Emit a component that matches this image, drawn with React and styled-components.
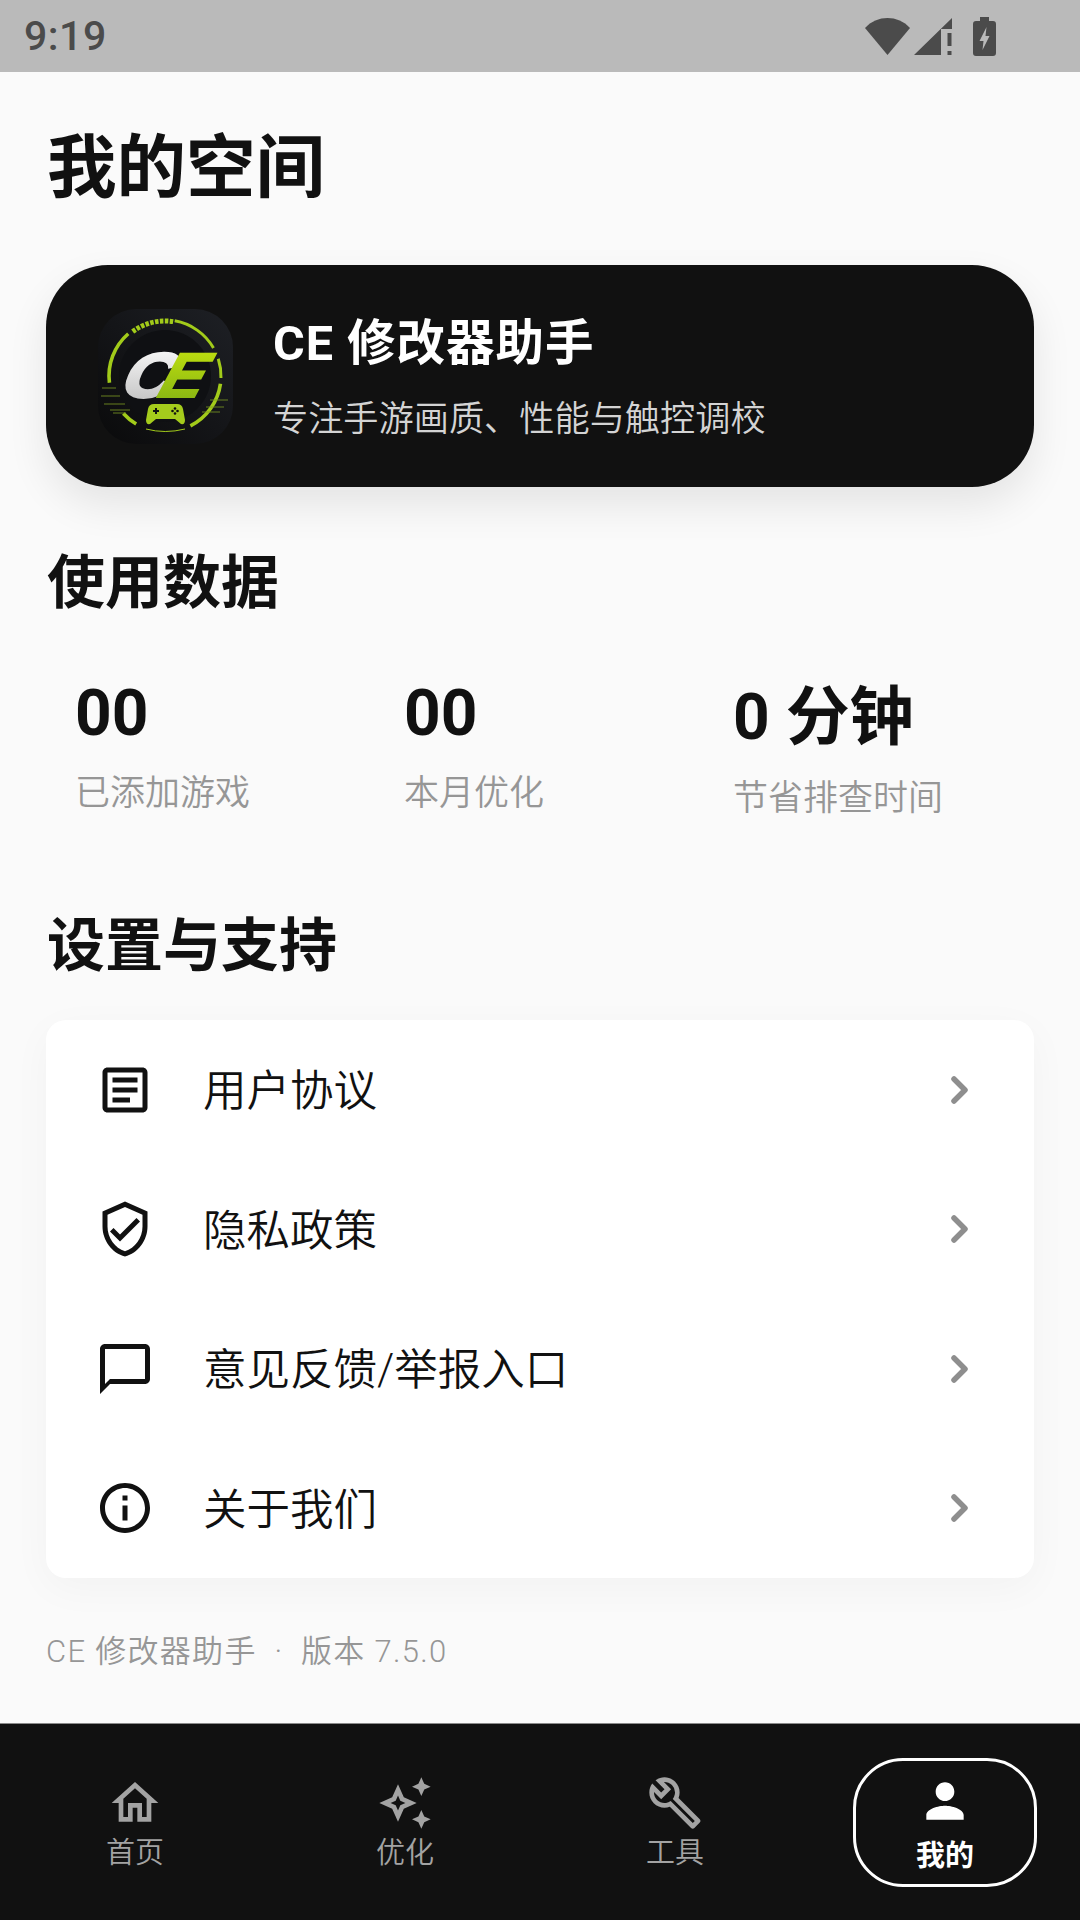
import React from 'react';
import styled, { createGlobalStyle } from 'styled-components';
import {
  MdOutlineArticle,
  MdOutlineVerifiedUser,
  MdChatBubbleOutline,
  MdInfoOutline,
  MdOutlineHome,
  MdOutlineAutoAwesome,
  MdOutlineBuild,
  MdPerson,
} from 'react-icons/md';

const GlobalStyle = createGlobalStyle`
  html, body {
    margin: 0;
    padding: 0;
    background: #fafafa;
  }
  * {
    box-sizing: border-box;
  }
`;

const Page = styled.div`
  width: 1080px;
  height: 1920px;
  display: flex;
  flex-direction: column;
  background: #fafafa;
  color: #111;
  font-family: Roboto, "Noto Sans CJK SC", sans-serif;
  overflow: hidden;
`;

const StatusBar = styled.div`
  height: 72px;
  flex: none;
  display: flex;
  align-items: center;
  justify-content: space-between;
  padding: 0 84px 0 24px;
  background: #bababa;
  color: #4b4b4b;
`;

const Clock = styled.span`
  font-size: 41px;
  font-weight: 500;
  letter-spacing: 0.5px;
`;

const StatusIcons = styled.div`
  display: flex;
  align-items: center;
  gap: 4px;
`;

const Main = styled.main`
  flex: 1;
  padding: 47px 46px 0;
  display: flex;
  flex-direction: column;
`;

const PageTitle = styled.h1`
  margin: 0 0 0 1px;
  font-size: 69.5px;
  line-height: 100px;
  font-weight: 700;
  color: #111;
`;

const HeroCard = styled.section`
  margin-top: 46px;
  height: 222px;
  flex: none;
  display: flex;
  align-items: center;
  gap: 40px;
  padding: 0 0 0 52px;
  background: #111;
  border-radius: 62px;
  box-shadow: 0 18px 40px rgba(0, 0, 0, 0.09);
`;

const HeroText = styled.div`
  display: flex;
  flex-direction: column;
  gap: 16px;
  margin-bottom: 8px;
`;

const HeroName = styled.div`
  font-size: 48.5px;
  font-weight: 700;
  color: #fff;
  letter-spacing: 1px;
`;

const HeroDesc = styled.div`
  font-size: 35.2px;
  font-weight: 350;
  color: #d4d4d4;
`;

const SectionTitle = styled.h2`
  margin: ${(p) => p.$top}px 0 0 1px;
  font-size: 58px;
  line-height: 80px;
  font-weight: 700;
  color: #111;
`;

const StatsRow = styled.div`
  margin-top: 53px;
  display: grid;
  grid-template-columns: repeat(3, 329px);
  padding-left: 29px;
  align-items: start;
`;

const Stat = styled.div`
  display: flex;
  flex-direction: column;
  gap: 13px;
`;

const StatValue = styled.div`
  font-size: 64px;
  line-height: 75px;
  font-weight: 700;
  color: #111;
  margin: ${(p) => (p.$cjk ? '4px 0 1px' : '0')};
`;

const StatLabel = styled.div`
  font-size: 35px;
  font-weight: 350;
  color: #969696;
`;

const SettingsCard = styled.section`
  margin-top: 34px;
  flex: none;
  background: #fff;
  border-radius: 20px;
  box-shadow: 0 10px 40px rgba(0, 0, 0, 0.035);
`;

const SettingRow = styled.div`
  height: 139.5px;
  display: flex;
  align-items: center;
  padding: 0 46px 0 49px;
  gap: 48px;
  font-size: 43.5px;
  font-weight: 350;
  color: #111;

  svg.lead {
    width: 60px;
    height: 60px;
    flex: none;
    color: #111;
  }
`;

const SettingLabel = styled.span`
  flex: 1;
  padding-bottom: 4px;
`;

const Footnote = styled.div`
  margin: 48px 0 0;
  font-size: 31px;
  font-weight: 350;
  color: #969696;
  letter-spacing: 1.3px;
  white-space: pre;
`;

const BottomNav = styled.nav`
  height: 197px;
  flex: none;
  display: grid;
  grid-template-columns: repeat(4, 270px);
  align-items: center;
  background: #111;
  border-top: 1px solid #8a8a8a;
`;

const NavItem = styled.div`
  justify-self: center;
  display: flex;
  flex-direction: column;
  align-items: center;
  justify-content: center;
  gap: ${(p) => (p.$active ? '9px' : '4px')};
  width: ${(p) => (p.$active ? '184px' : '160px')};
  height: 129px;
  padding-top: 2px;
  border-radius: 50px;
  border: ${(p) => (p.$active ? '3px solid #fff' : '3px solid transparent')};
  color: ${(p) => (p.$active ? '#fff' : '#a3a3a3')};
  font-size: 29px;
  font-weight: ${(p) => (p.$active ? 700 : 350)};
  line-height: 36px;

  svg {
    width: 56px;
    height: 56px;
    flex: none;
  }
`;

const Chevron = () => (
  <svg width="56" height="56" viewBox="0 0 56 56" fill="none">
    <path d="M22 17 L33 28 L22 39" stroke="#8e8e8e" strokeWidth="5.5" strokeLinecap="round" strokeLinejoin="round" />
  </svg>
);

const WifiIcon = () => (
  <svg width="45" height="37" viewBox="0 0 45 37">
    <path d="M0 10 C12 -3.3 33 -3.3 45 10 L22.5 37 Z" fill="#4b4b4b" />
  </svg>
);

const SignalIcon = () => (
  <svg width="38" height="37" viewBox="0 0 38 37">
    <path d="M0 37 L38 0 V11 H27 V37 Z" fill="#4b4b4b" />
    <rect x="33.5" y="15" width="4" height="13" fill="#4b4b4b" />
    <rect x="33.5" y="33" width="4" height="4" fill="#4b4b4b" />
  </svg>
);

const BatteryIcon = () => (
  <svg width="23" height="39" viewBox="0 0 23 39" style={{ marginLeft: 17 }}>
    <path d="M7 0 H16 V4 H20 Q23 4 23 7 V36 Q23 39 20 39 H3 Q0 39 0 36 V7 Q0 4 3 4 H7 Z" fill="#4b4b4b" />
    <path d="M13.5 10 L6.5 24 H10.5 L9.5 33 L16.5 19 H12.5 Z" fill="#bababa" />
  </svg>
);

// ring segments of the logo, angles are clockwise from the top
const arc = (from, to, r = 56) => {
  const pt = (deg) => {
    const a = (deg * Math.PI) / 180;
    return `${(67 + r * Math.sin(a)).toFixed(2)} ${(67 - r * Math.cos(a)).toFixed(2)}`;
  };
  return `M${pt(from)} A${r} ${r} 0 ${to - from > 180 ? 1 : 0} 1 ${pt(to)}`;
};

const Logo = () => (
  <svg width="135" height="135" viewBox="0 0 135 135" style={{ flex: 'none' }}>
    <defs>
      <linearGradient id="logoBg" x1="1" y1="0" x2="0" y2="1">
        <stop offset="0" stopColor="#1e2025" />
        <stop offset="1" stopColor="#0a0a0b" />
      </linearGradient>
      <linearGradient id="logoC" x1="0" y1="0" x2="0" y2="1">
        <stop offset="0" stopColor="#ffffff" />
        <stop offset="1" stopColor="#bdbdbd" />
      </linearGradient>
      <linearGradient id="logoE" x1="0" y1="0" x2="0" y2="1">
        <stop offset="0" stopColor="#c8e60e" />
        <stop offset="1" stopColor="#7fae14" />
      </linearGradient>
    </defs>
    <rect width="135" height="135" rx="38" fill="url(#logoBg)" />
    <circle cx="67" cy="67" r="46" fill="#0f1013" />
    <g fill="none" stroke="#a2cb1a" strokeWidth="3">
      <path d={arc(-36, 8.5, 55)} strokeWidth="5" strokeDasharray="3.5 1.4" />
      <path d={arc(10, 60)} />
      <path d={arc(72, 92)} />
      <path d={arc(98, 153)} strokeWidth="3.6" />
      <path d={arc(-149, -132)} strokeWidth="3.6" />
      <path d={arc(-97, -41)} strokeWidth="3.6" />
      <path d="M48 120 Q67 125 87 120" strokeWidth="1" />
    </g>
    <g stroke="#7d9a22" strokeWidth="1" opacity="0.8">
      <path d="M4 79 H18 M3 87 H22 M6 95 H27 M12 101 H32 M15 104 H28" />
      <path d="M112 91 H130 M108 98 H126 M104 103 H122" />
    </g>
    <text
      transform="translate(19 87.5) skewX(-24) scale(1.12 1)"
      fontFamily="Liberation Sans, sans-serif"
      fontWeight="700"
      fontSize="63"
      fill="url(#logoC)"
      stroke="url(#logoC)"
      strokeWidth="2.6"
    >
      C
    </text>
    <text
      transform="translate(55 87.5) skewX(-28) scale(1.04 1)"
      fontFamily="Liberation Sans, sans-serif"
      fontWeight="700"
      fontSize="63"
      fill="url(#logoE)"
      stroke="url(#logoE)"
      strokeWidth="2"
    >
      E
    </text>
    <path
      d="M56 95 H79 Q84 95 85 100 L87 111 Q87 116 83 115 L77 110 H58 L52 115 Q48 116 48 111 L50 100 Q51 95 56 95 Z"
      fill="#a5cc1c"
    />
    <path d="M55 102 H61 M58 99 V105" stroke="#111" strokeWidth="2" />
    <g fill="#111">
      <circle cx="77" cy="99.5" r="1.3" />
      <circle cx="77" cy="104.5" r="1.3" />
      <circle cx="74.5" cy="102" r="1.3" />
      <circle cx="79.5" cy="102" r="1.3" />
    </g>
  </svg>
);

const stats = [
  { value: '00', label: '已添加游戏' },
  { value: '00', label: '本月优化' },
  { value: '0 分钟', label: '节省排查时间', cjk: true },
];

const settings = [
  { icon: MdOutlineArticle, label: '用户协议' },
  { icon: MdOutlineVerifiedUser, label: '隐私政策' },
  { icon: MdChatBubbleOutline, label: '意见反馈/举报入口' },
  { icon: MdInfoOutline, label: '关于我们' },
];

const tabs = [
  { icon: MdOutlineHome, label: '首页' },
  { icon: MdOutlineAutoAwesome, label: '优化' },
  { icon: MdOutlineBuild, label: '工具' },
  { icon: MdPerson, label: '我的', active: true },
];

export default function App() {
  return (
    <Page>
      <GlobalStyle />
      <StatusBar>
        <Clock>9:19</Clock>
        <StatusIcons>
          <WifiIcon />
          <SignalIcon />
          <BatteryIcon />
        </StatusIcons>
      </StatusBar>
      <Main>
        <PageTitle>我的空间</PageTitle>
        <HeroCard>
          <Logo />
          <HeroText>
            <HeroName>CE 修改器助手</HeroName>
            <HeroDesc>专注手游画质、性能与触控调校</HeroDesc>
          </HeroText>
        </HeroCard>
        <SectionTitle $top={56}>使用数据</SectionTitle>
        <StatsRow>
          {stats.map((s) => (
            <Stat key={s.label}>
              <StatValue $cjk={s.cjk}>{s.value}</StatValue>
              <StatLabel>{s.label}</StatLabel>
            </Stat>
          ))}
        </StatsRow>
        <SectionTitle $top={86}>设置与支持</SectionTitle>
        <SettingsCard>
          {settings.map((s) => (
            <SettingRow key={s.label}>
              <s.icon className="lead" />
              <SettingLabel>{s.label}</SettingLabel>
              <Chevron />
            </SettingRow>
          ))}
        </SettingsCard>
        <Footnote>CE 修改器助手  ·  版本 7.5.0</Footnote>
      </Main>
      <BottomNav>
        {tabs.map((t) => (
          <NavItem key={t.label} $active={t.active}>
            <t.icon />
            {t.label}
          </NavItem>
        ))}
      </BottomNav>
    </Page>
  );
}
